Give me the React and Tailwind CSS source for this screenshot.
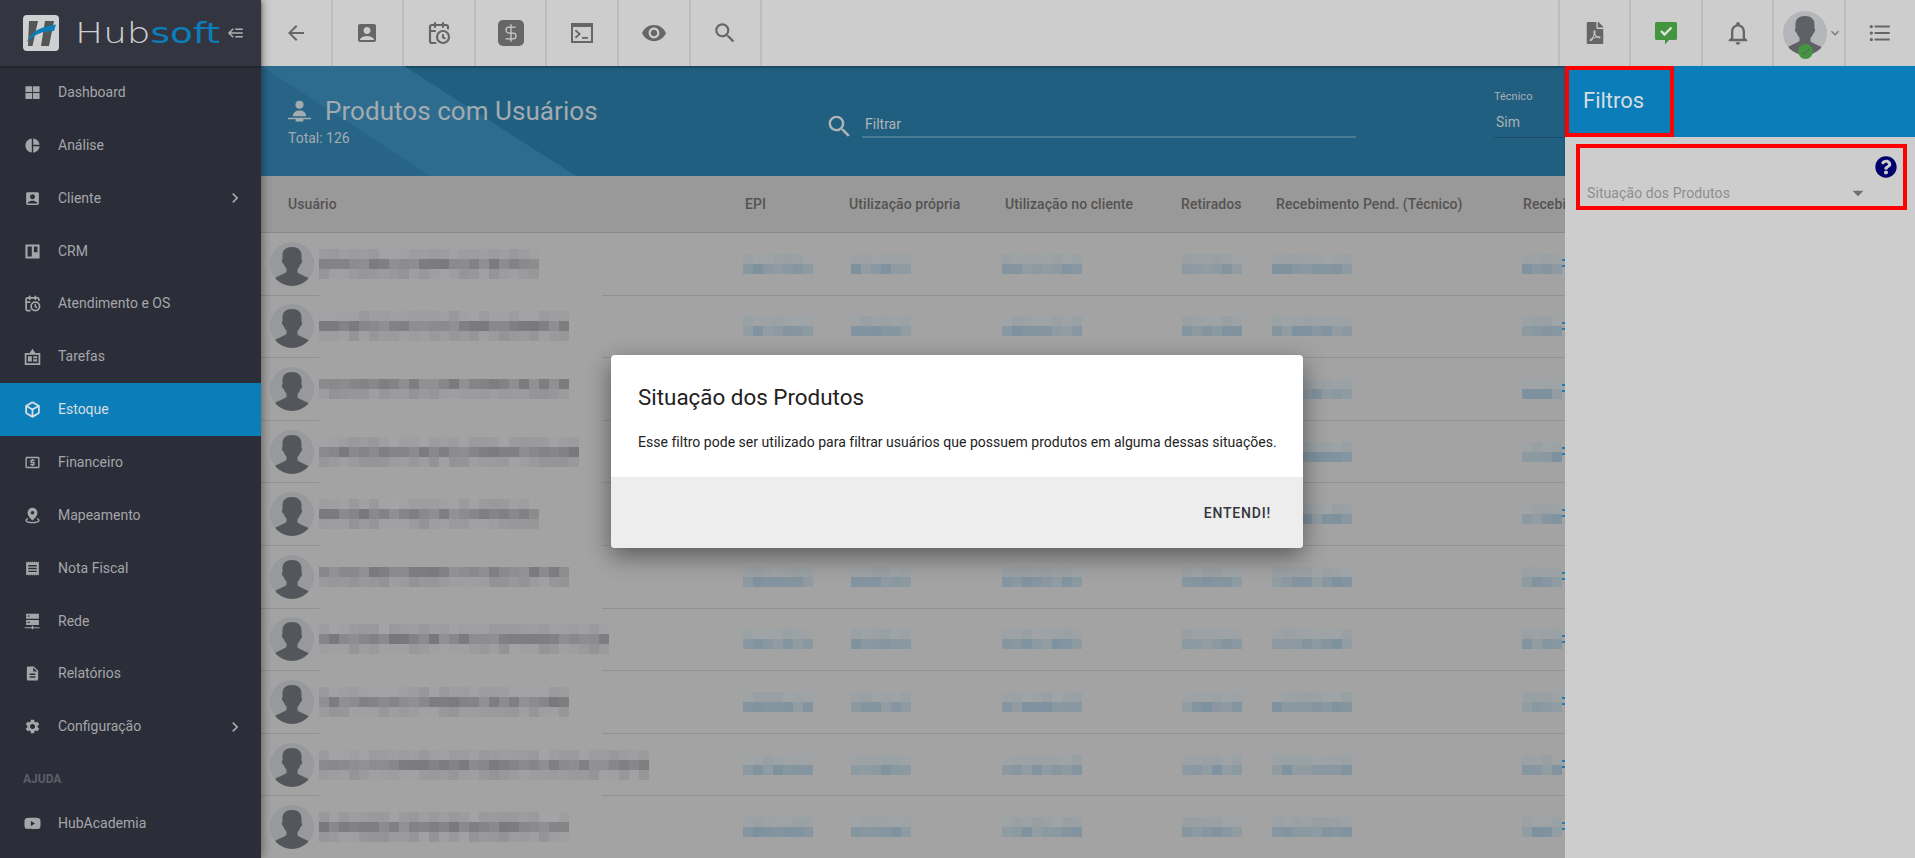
import * as React from "react";
import {
  MdPieChart,
  MdAccountBox,
  MdLocalAtm,
  MdReceipt,
  MdDescription,
  MdSettings,
  MdArrowBack,
  MdSearch,
  MdVisibility,
  MdNotificationsNone,
  MdChevronRight,
  MdKeyboardArrowDown,
  MdArrowDropDown,
  MdFormatListBulleted,
  MdCheck,
} from "react-icons/md";
import { FaYoutube, FaFilePdf, FaQuestionCircle } from "react-icons/fa";
import { CalendarClock, Box, DollarSign } from "lucide-react";

function WindowsIcon({ className }) {
  return (
    <svg viewBox="0 0 24 24" className={className} fill="currentColor">
      <path d="M2 3h9.400v8.400H2zM12.600 3H22v8.400h-9.400zM2 12.600h9.400V21H2zM12.600 12.600H22V21h-9.400z" />
    </svg>
  );
}

function KanbanIcon({ className }) {
  return (
    <svg viewBox="0 0 24 24" className={className} fill="currentColor">
      <path fillRule="evenodd" d="M2 2h20v20H2zM5 5v14h6V5zM14 5v8h5V5z" />
    </svg>
  );
}

function BadgeIcon({ className }) {
  return (
    <svg viewBox="0 0 24 24" className={className} fill="currentColor">
      <path
        fillRule="evenodd"
        d="M1 7h7l4-6 4 6h7v17H1zM3.500 9.500v12h17v-12zM5.500 11.500H11V19H5.500zM13 11.500h5.500v3H13zM13 16h5.500v3H13z"
      />
    </svg>
  );
}

function PinIcon({ className }) {
  return (
    <svg viewBox="0 0 24 24" className={className} fill="currentColor">
      <path
        fillRule="evenodd"
        d="M12 1a7 7 0 0 1 7 7c0 4-4 8.500-7 11-3-2.500-7-7-7-11a7 7 0 0 1 7-7zm0 4.500a2.500 2.500 0 1 0 0 5 2.500 2.500 0 0 0 0-5z"
      />
      <path d="M5 15.500C3 16.500 2 17.700 2 19c0 2.400 4.500 4 10 4s10-1.600 10-4c0-1.300-1-2.500-3-3.500l-1.200 1.600c1.400.6 2.200 1.300 2.200 1.900 0 1-3.200 2-8 2s-8-1-8-2c0-.6.800-1.300 2.200-1.900z" />
    </svg>
  );
}

function ServerIcon({ className }) {
  return (
    <svg viewBox="0 0 24 24" className={className} fill="currentColor">
      <path
        fillRule="evenodd"
        d="M3 1h18v7H3zM5 3.500v1.500h3V3.500zM3 10h18v7H3zM5 12.500V14h3v-1.500zM11 18h2v2h9v1.500h-9V23h-2v-1.500H1V20h10z"
      />
    </svg>
  );
}

function TerminalIcon({ className }) {
  return (
    <svg viewBox="0 0 24 24" className={className} fill="currentColor">
      <path
        fillRule="evenodd"
        d="M1 2h22v20H1zM3 6v14h18V6zM6 8.500l5 4.500-5 4.500-1.200-1.400L8.400 13 4.800 9.900zM12 16h6v1.800h-6z"
      />
    </svg>
  );
}

function BackburgerIcon({ className }) {
  return (
    <svg viewBox="0 0 24 24" className={className} fill="currentColor">
      <path d="M5 13l4 4-1.400 1.420L1.180 12 7.600 5.580 9 7l-4 4h16v2H5m16-7v2H11V6h10m0 10v2H11v-2h10z" />
    </svg>
  );
}

function MessageCheckIcon({ className }) {
  return (
    <svg viewBox="0 0 24 24" className={className}>
      <path
        fill="#43953f"
        d="M2.500 1h19A1.500 1.500 0 0 1 23 2.500v15a1.500 1.500 0 0 1-1.500 1.500H15l-4 4.500V19H2.500A1.500 1.500 0 0 1 1 17.500v-15A1.500 1.500 0 0 1 2.500 1z"
      />
      <path fill="none" stroke="#dfe6df" strokeWidth="2.400" d="M7 10l3.500 3.500L17.500 6.500" />
    </svg>
  );
}

function DeskPersonIcon({ className }) {
  return (
    <svg viewBox="0 0 24 24" className={className} fill="currentColor">
      <circle cx="12" cy="5" r="4.200" />
      <path d="M5 17c.4-4 3-6 7-6s6.600 2 7 6zM0 18.500h24V20h-8v2.500H8V20H0z" />
    </svg>
  );
}

function Silhouette({ className, bg = "#97999c", fg = "#53575b" }) {
  return (
    <svg viewBox="0 0 44 44" className={className}>
      <defs>
        <clipPath id="avatar-clip">
          <circle cx="22" cy="22" r="22" />
        </clipPath>
      </defs>
      <circle cx="22" cy="22" r="22" fill={bg} />
      <path
        clipPath="url(#avatar-clip)"
        fill={fg}
        d="M22 5c6 0 9.500 3 9.500 8.500 0 1 0 2.500-.1 4 .8.300.9 1.500.4 3-.4 1.200-1 1.800-1.500 1.800-.6 2-1.600 3.700-2.800 4.800v3.400c2 1.700 6.500 3.200 11 5.500L38 44H6l-.5-8.500c4.500-2.300 9-3.800 11-5.500v-3.400c-1.200-1.100-2.200-2.800-2.800-4.800-.5 0-1.100-.6-1.500-1.800-.5-1.500-.4-2.700.4-3-.1-1.500-.1-3-.1-4C12.500 8 16 5 22 5z"
      />
    </svg>
  );
}

function LogoMark({ className }) {
  return (
    <svg viewBox="0 0 36 36" className={className}>
      <rect width="36" height="36" rx="4" fill="#cfd0d1" />
      <path fill="#555" d="M6 6h9l-5.500 25H5zM22 6h9l-5 25h-8z" />
      <path fill="#0b7eb9" d="M3.500 27C9 16 17 12 33 9.500l-2 6.500C20 16 12 19 3.500 27z" />
    </svg>
  );
}

function CalendarIcon({ className }) {
  return <CalendarClock className={className} strokeWidth={2.4} />;
}

function BoxIcon({ className }) {
  return <Box className={className} strokeWidth={2.6} />;
}

const NAVIGATION_DATA = [
  { title: "Dashboard", icon: WindowsIcon },
  { title: "Análise", icon: MdPieChart },
  { title: "Cliente", icon: MdAccountBox, arrow: true },
  { title: "CRM", icon: KanbanIcon },
  { title: "Atendimento e OS", icon: CalendarIcon },
  { title: "Tarefas", icon: BadgeIcon },
  { title: "Estoque", icon: BoxIcon, active: true },
  { title: "Financeiro", icon: MdLocalAtm },
  { title: "Mapeamento", icon: PinIcon },
  { title: "Nota Fiscal", icon: MdReceipt },
  { title: "Rede", icon: ServerIcon },
  { title: "Relatórios", icon: MdDescription },
  { title: "Configuração", icon: MdSettings, arrow: true },
];

const COLUMNS = [
  "Usuário",
  "EPI",
  "Utilização própria",
  "Utilização no cliente",
  "Retirados",
  "Recebimento Pend. (Técnico)",
  "Recebi",
];

// names are pixelated in the picture: [cells wide, layers]
const ROWS = [
  [22, 3],
  [25, 3],
  [25, 2],
  [26, 3],
  [22, 3],
  [25, 2],
  [29, 3],
  [25, 3],
  [33, 3],
  [25, 3],
];

const VALUE_CELLS = [7, 6, 8, 6, 8, 4];
const VALUE_OFFSETS = ["-ml-[2px]", "ml-[2px]", "-ml-[3px]", "ml-[1px]", "-ml-[4px]", "-ml-[1px]"];

function noise(a, b, c) {
  const x = Math.sin(a * 127.1 + b * 311.7 + c * 74.7) * 43758.5453;
  return x - Math.floor(x);
}

function NameMosaic({ row, cells, layers }) {
  const ranges = layers === 3 ? [[152, 164], [120, 146], [148, 162]] : [[122, 146], [146, 160]];
  return (
    <div className="flex flex-col">
      {ranges.map(([low, high], layer) => (
        <div key={layer} className="flex h-[10px]">
          {Array.from({ length: cells }, (_, c) => {
            const v = Math.round(low + (high - low) * noise(row + 1, c, layer));
            return (
              <span
                key={c}
                className="block h-[10px] w-[10px]"
                style={{ backgroundColor: `rgb(${v},${v},${v + 2})` }}
              />
            );
          })}
        </div>
      ))}
    </div>
  );
}

function ValueMosaic({ row, col, cells }) {
  return (
    <div className="flex flex-col">
      {[0, 1].map((layer) => (
        <div key={layer} className="flex h-[10px]">
          {Array.from({ length: cells }, (_, c) => {
            const n = noise(row + 7, c + col * 11, layer);
            const color =
              layer === 0
                ? `rgb(${152 + n * 8},${160 + n * 4},${164 + n * 2})`
                : `rgb(${125 + n * 22},${145 + n * 12},${158 + n * 5})`;
            return (
              <span
                key={c}
                className="block h-[10px] w-[10px]"
                style={{ backgroundColor: color }}
              />
            );
          })}
        </div>
      ))}
    </div>
  );
}

function Sidebar() {
  return (
    <aside className="relative z-20 flex w-[261px] shrink-0 flex-col bg-[#2b2d38] text-[14px] text-[#a5a6aa] shadow-[2px_0_8px_rgba(0,0,0,0.35)]">
      <div className="flex h-[66px] shrink-0 items-center bg-[#333640] pl-[23px] shadow-[0_1px_3px_rgba(0,0,0,0.4)]">
        <LogoMark className="h-[36px] w-[36px]" />
        <span className="ml-[16px] w-[143px] origin-left scale-x-[1.29] font-['DejaVu_Sans'] text-[29px] leading-none font-extralight whitespace-nowrap text-[#cfcfcf]">
          Hub<span className="font-normal text-[#0b7eb9]">soft</span>
        </span>
        <BackburgerIcon className="ml-[9px] h-[18px] w-[18px] text-[#b0b0b0]" />
      </div>
      <nav className="flex flex-col">
        {NAVIGATION_DATA.map((item) => (
          <SidebarItem key={item.title} {...item} />
        ))}
      </nav>
      <div className="mt-[19px] pl-[23px] text-[12px] leading-[14px] font-bold text-[#5d5f68]">
        AJUDA
      </div>
      <div className="mt-[11px]">
        <SidebarItem title="HubAcademia" icon={FaYoutube} />
      </div>
    </aside>
  );
}

function SidebarItem({ title, icon: Icon, arrow, active }) {
  return (
    <a
      className={
        active
          ? "flex h-[52.86px] items-center bg-[#0b7eb9] pl-[24px] text-[#d7dde2]"
          : "flex h-[52.86px] items-center pl-[24px]"
      }
    >
      <Icon className="h-[17px] w-[17px] shrink-0" />
      <span className="ml-[17px] flex-1">{title}</span>
      {arrow && <MdChevronRight className="mr-[16px] h-[20px] w-[20px]" />}
    </a>
  );
}

function BarCell({ children, left }) {
  return (
    <div
      className={
        left
          ? "flex h-full w-[71.6px] items-center justify-center border-r-2 border-[#bdbdbd] text-[#666]"
          : "flex h-full w-[71.4px] items-center justify-center border-l-2 border-[#bdbdbd] text-[#666]"
      }
    >
      {children}
    </div>
  );
}

function Topbar() {
  return (
    <header className="flex h-[66px] shrink-0 justify-between bg-[#cdcdcd]">
      <div className="flex">
        <BarCell left>
          <MdArrowBack className="h-[24px] w-[24px]" />
        </BarCell>
        <BarCell left>
          <MdAccountBox className="h-[24px] w-[24px]" />
        </BarCell>
        <BarCell left>
          <CalendarClock className="h-[24px] w-[24px]" strokeWidth={2.2} />
        </BarCell>
        <BarCell left>
          <span className="flex h-[26px] w-[26px] items-center justify-center rounded-[5px] bg-[#666] text-[#cdcdcd]">
            <DollarSign className="h-[20px] w-[20px]" strokeWidth={1.5} />
          </span>
        </BarCell>
        <BarCell left>
          <TerminalIcon className="h-[24px] w-[24px]" />
        </BarCell>
        <BarCell left>
          <MdVisibility className="h-[26px] w-[26px]" />
        </BarCell>
        <BarCell left>
          <MdSearch className="h-[26px] w-[26px]" />
        </BarCell>
      </div>
      <div className="flex">
        <BarCell>
          <FaFilePdf className="h-[22px] w-[22px]" />
        </BarCell>
        <BarCell>
          <MessageCheckIcon className="h-[24px] w-[24px]" />
        </BarCell>
        <BarCell>
          <MdNotificationsNone className="h-[28px] w-[28px]" />
        </BarCell>
        <BarCell>
          <div className="relative ml-[9px] flex items-center">
            <Silhouette className="h-[44px] w-[44px]" bg="#b5b6b9" fg="#5f6166" />
            <span className="absolute bottom-[-4px] left-[15px] flex h-[15px] w-[15px] items-center justify-center rounded-full bg-[#43953f] text-[#5f6166]">
              <MdCheck className="h-[11px] w-[11px]" />
            </span>
            <MdKeyboardArrowDown className="h-[16px] w-[16px] text-[#777]" />
          </div>
        </BarCell>
        <BarCell>
          <MdFormatListBulleted className="h-[26px] w-[26px]" />
        </BarCell>
      </div>
    </header>
  );
}

function PageHead() {
  return (
    <div className="relative flex h-[110px] shrink-0 bg-[#215f80] shadow-[inset_0_2px_2px_rgba(0,0,0,0.25)]">
      <svg
        className="absolute inset-0 h-full w-full"
        viewBox="0 0 1304 110"
        preserveAspectRatio="none"
      >
        <path fill="#276486" d="M0 0L169 110H0z" />
        <path fill="#2d6c8f" d="M0 0H143L315 110H169z" />
      </svg>
      <div className="relative w-[564px] pt-[28px] pl-[27px]">
        <div className="flex items-center text-[#a3abb0]">
          <DeskPersonIcon className="h-[23px] w-[23px]" />
          <h1 className="ml-[14px] text-[26px] leading-[34px] tracking-[0.05px]">
            Produtos com Usuários
          </h1>
        </div>
        <div className="mt-[2px] text-[14px] leading-[16px] text-[#a3abb0]">
          Total: 126
        </div>
      </div>
      <div className="relative mt-[45px] flex h-[27px] items-center">
        <MdSearch className="mt-[3px] h-[29px] w-[29px] text-[#b0b5b8]" />
        <div className="ml-[8px] h-[27px] w-[494px] border-b-2 border-[#4b7a93] pt-[1px] pl-[3px] text-[14px] leading-[25px] text-[#b0b5b8]">
          Filtrar
        </div>
      </div>
      <div className="relative ml-[138px] w-[71px] pt-[24px] text-[#a9b0b4]">
        <div className="text-[11px] leading-[14px]">Técnico</div>
        <div className="mt-[10px] h-[24px] border-b border-[#1a4d69] pl-[2px] text-[14px] leading-[16px]">
          Sim
        </div>
      </div>
    </div>
  );
}

function ProductTable() {
  return (
    <div className="flex-1 overflow-hidden bg-[#a3a3a3]">
      <div className="grid h-[57px] w-[1304px] grid-cols-[484px_104px_156px_176px_95px_247px_1fr] items-center border-b border-[#8a8a8a] bg-[#999999] text-[14px] font-medium tracking-[0.08px] whitespace-nowrap text-[#555351]">
        {COLUMNS.map((col, i) => (
          <div key={col} className={i === 0 ? "pl-[27px]" : ""}>
            {col}
          </div>
        ))}
      </div>
      {ROWS.map(([cells, layers], r) => (
        <div
          key={r}
          className="relative grid h-[62.6px] w-[1304px] grid-cols-[484px_104px_156px_176px_95px_247px_1fr] items-center border-b border-[#919191]"
        >
          <div className="flex items-center pl-[9px]">
            <Silhouette className="h-[44px] w-[44px] shrink-0" />
            <div className="ml-[5px]">
              <NameMosaic row={r} cells={cells} layers={layers} />
            </div>
          </div>
          {VALUE_CELLS.map((n, c) => (
            <div key={c} className={VALUE_OFFSETS[c]}>
              <ValueMosaic row={r} col={c} cells={n} />
            </div>
          ))}
          <span className="absolute -bottom-px left-[58px] h-[3px] w-[283px] bg-[#a3a3a3]" />
          <span className="absolute top-[26px] right-0 h-[8px] w-[3px] border-y-2 border-[#1f7fb5]" />
        </div>
      ))}
    </div>
  );
}

function FilterPanel() {
  return (
    <aside className="relative z-10 w-[350px] shrink-0 bg-[#cdcdcd]">
      <div className="flex h-[71px] items-center bg-[#0b7eb9]">
        <div className="flex h-full w-[109px] items-center border-4 border-[#ff0000] pb-[2px] pl-[14px] text-[22px] text-[#d5dde3]">
          Filtros
        </div>
      </div>
      <div className="mx-[11px] mt-[7px] h-[66px] w-[331px] border-4 border-[#ff0000] pr-[6px] pl-[7px]">
        <div className="flex justify-end pt-[8px]">
          <FaQuestionCircle className="h-[22px] w-[22px] text-[#00006b]" />
        </div>
        <div className="mt-[2px] flex items-center justify-between text-[14px] leading-[20px] tracking-[0.08px] text-[#8e8e8e]">
          <span>Situação dos Produtos</span>
          <MdArrowDropDown className="mr-[26px] h-[26px] w-[26px] text-[#6f6f6f]" />
        </div>
      </div>
    </aside>
  );
}

function HelpDialog() {
  return (
    <div className="absolute top-[355px] left-[611px] z-30 w-[692px] overflow-hidden rounded-[4px] bg-white shadow-[0_8px_24px_rgba(0,0,0,0.45)]">
      <div className="h-[122px] pt-[29px] pl-[27px]">
        <h2 className="text-[22.4px] leading-[26px] text-[#222]">
          Situação dos Produtos
        </h2>
        <p className="mt-[23px] text-[14px] leading-[18px] tracking-[0.02px] text-[#222]">
          Esse filtro pode ser utilizado para filtrar usuários que possuem produtos em alguma dessas situações.
        </p>
      </div>
      <div className="flex h-[71px] items-center justify-end bg-[#ededed] pt-[1px] pr-[32px]">
        <button className="text-[14px] font-medium tracking-[0.8px] text-[#33353f]">
          ENTENDI!
        </button>
      </div>
    </div>
  );
}

export default function App() {
  return (
    <div className="relative flex h-[858px] w-[1915px] overflow-hidden bg-[#a3a3a3] font-['Roboto',sans-serif]">
      <Sidebar />
      <main className="flex min-w-0 flex-1 flex-col">
        <Topbar />
        <div className="flex min-h-0 flex-1">
          <div className="flex min-w-0 flex-1 flex-col">
            <PageHead />
            <ProductTable />
          </div>
          <FilterPanel />
        </div>
      </main>
      <HelpDialog />
    </div>
  );
}
